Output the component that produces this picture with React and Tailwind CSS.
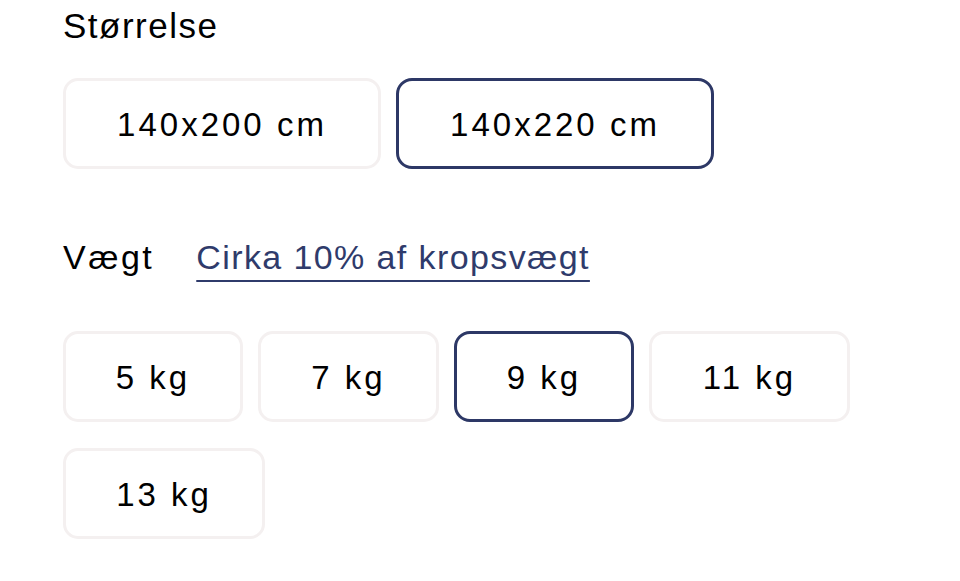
import React from "react";

const sizes = [
  { label: "140x200 cm", w: "w-[318px]", sel: false },
  { label: "140x220 cm", w: "w-[318px]", sel: true },
];

const weights = [
  { label: "5 kg", w: "w-[180px]", sel: false },
  { label: "7 kg", w: "w-[181px]", sel: false },
  { label: "9 kg", w: "w-[180px]", sel: true },
  { label: "11 kg", w: "w-[201px]", sel: false },
  { label: "13 kg", w: "w-[202px]", sel: false },
];

function Option({ label, w, sel }) {
  return (
    <button
      className={
        sel
          ? `${w} h-[91px] flex items-center justify-center pt-[2px] rounded-[16px] border-[3px] border-[#2d3866] bg-white text-[33px] tracking-[3px] text-black`
          : `${w} h-[91px] flex items-center justify-center pt-[2px] rounded-[15px] border-[3px] border-[#f4f0f0] bg-white text-[33px] tracking-[3px] text-black`
      }
    >
      {label}
    </button>
  );
}

export default function App() {
  return (
    <div
      className="min-h-[581px] w-[960px] bg-white pl-[63px] pt-[6px] text-black"
      style={{ fontFamily: '"Liberation Sans", Arial, sans-serif' }}
    >
      <div className="text-[35px] leading-[40px] tracking-[1.5px]">Størrelse</div>
      <div className="mt-[32px] flex gap-[15px]">
        {sizes.map((s) => (
          <Option key={s.label} {...s} />
        ))}
      </div>
      <div className="mt-[68px] flex items-baseline gap-[42px]">
        <span className="text-[34px] leading-[40px] tracking-[2.5px]">Vægt</span>
        <a
          href="#"
          className="text-[34px] leading-[40px] tracking-[1.4px] text-[#2f3b6b] underline decoration-[2px] underline-offset-[11px]"
        >
          Cirka 10% af kropsvægt
        </a>
      </div>
      <div className="mt-[54px] flex w-[800px] flex-wrap gap-x-[15px] gap-y-[26px]">
        {weights.map((s) => (
          <Option key={s.label} {...s} />
        ))}
      </div>
    </div>
  );
}
